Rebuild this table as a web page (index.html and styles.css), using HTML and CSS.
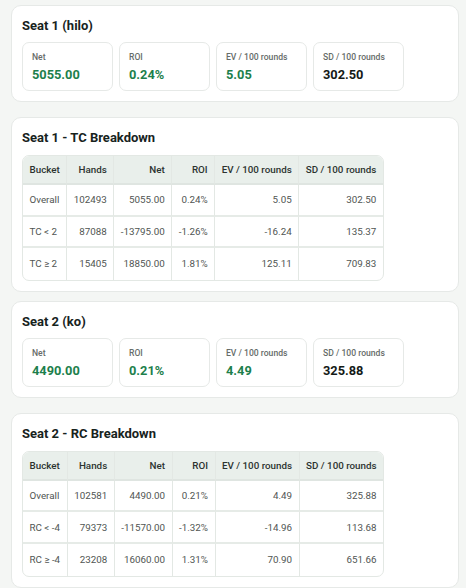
FILE: index.html
```html
<!DOCTYPE html>
<html>
<head>
<meta charset="utf-8">
<link rel="stylesheet" href="styles.css">
</head>
<body>
<main class="page">
  <section class="card card-summary">
    <h2 class="card-title">Seat 1 (hilo)</h2>
    <div class="stats">
      <div class="stat"><div class="stat-label">Net</div><div class="stat-value pos">5055.00</div></div>
      <div class="stat"><div class="stat-label">ROI</div><div class="stat-value pos">0.24%</div></div>
      <div class="stat"><div class="stat-label">EV / 100 rounds</div><div class="stat-value pos">5.05</div></div>
      <div class="stat"><div class="stat-label">SD / 100 rounds</div><div class="stat-value">302.50</div></div>
    </div>
  </section>

  <section class="card card-breakdown">
    <h2 class="card-title">Seat 1 - TC Breakdown</h2>
    <table class="tbl">
      <thead>
        <tr><th class="l">Bucket</th><th>Hands</th><th>Net</th><th>ROI</th><th>EV / 100 rounds</th><th>SD / 100 rounds</th></tr>
      </thead>
      <tbody>
        <tr><td class="l">Overall</td><td>102493</td><td>5055.00</td><td>0.24%</td><td>5.05</td><td>302.50</td></tr>
        <tr><td class="l">TC &lt; 2</td><td>87088</td><td>-13795.00</td><td>-1.26%</td><td>-16.24</td><td>135.37</td></tr>
        <tr><td class="l">TC ≥ 2</td><td>15405</td><td>18850.00</td><td>1.81%</td><td>125.11</td><td>709.83</td></tr>
      </tbody>
    </table>
  </section>

  <section class="card card-summary">
    <h2 class="card-title">Seat 2 (ko)</h2>
    <div class="stats">
      <div class="stat"><div class="stat-label">Net</div><div class="stat-value pos">4490.00</div></div>
      <div class="stat"><div class="stat-label">ROI</div><div class="stat-value pos">0.21%</div></div>
      <div class="stat"><div class="stat-label">EV / 100 rounds</div><div class="stat-value pos">4.49</div></div>
      <div class="stat"><div class="stat-label">SD / 100 rounds</div><div class="stat-value">325.88</div></div>
    </div>
  </section>

  <section class="card card-breakdown">
    <h2 class="card-title">Seat 2 - RC Breakdown</h2>
    <table class="tbl">
      <thead>
        <tr><th class="l">Bucket</th><th>Hands</th><th>Net</th><th>ROI</th><th>EV / 100 rounds</th><th>SD / 100 rounds</th></tr>
      </thead>
      <tbody>
        <tr><td class="l">Overall</td><td>102581</td><td>4490.00</td><td>0.21%</td><td>4.49</td><td>325.88</td></tr>
        <tr><td class="l">RC &lt; -4</td><td>79373</td><td>-11570.00</td><td>-1.32%</td><td>-14.96</td><td>113.68</td></tr>
        <tr><td class="l">RC ≥ -4</td><td>23208</td><td>16060.00</td><td>1.31%</td><td>70.90</td><td>651.66</td></tr>
      </tbody>
    </table>
  </section>
</main>
</body>
</html>
```

FILE: styles.css
```css
* { box-sizing: border-box; }
html, body { margin: 0; padding: 0; }
body {
  background: #f4f6f4;
  font-family: Roboto, "Liberation Sans", sans-serif;
  color: #1b2420;
}
.page {
  display: flex;
  flex-direction: column;
  padding: 5px 7px 0 11px;
}
.card {
  background: #fff;
  border: 1px solid #e6e9e7;
  border-radius: 10px;
  padding: 12px 10px 10px 10px;
}
.card-summary { margin-bottom: 15px; }
.card-breakdown { margin-bottom: 9px; }
.card-title {
  margin: 0 0 9px 0;
  font-size: 13px;
  font-weight: 700;
  line-height: 15px;
  color: #17231d;
}
.card-breakdown .card-title { margin-bottom: 10px; }
.stats {
  display: flex;
  gap: 6px;
}
.stat {
  width: 91px;
  border: 1px solid #e6e9e7;
  border-radius: 7px;
  padding: 9px 8px 8px 9px;
  display: flex;
  flex-direction: column;
  gap: 5px;
}
.stat-label {
  font-size: 8.6px;
  font-weight: 500;
  color: #666c69;
  line-height: 10px;
}
.stat-value {
  font-size: 12.8px;
  font-weight: 700;
  color: #141a17;
  line-height: 15px;
}
.stat-value.pos { color: #1d7f4c; }
.tbl {
  border-collapse: separate;
  border-spacing: 0;
  border: 1px solid #e3e8e4;
  border-radius: 7px;
  overflow: hidden;
  font-size: 9.8px;
  align-self: flex-start;
}
.tbl th, .tbl td {
  text-align: right;
  padding: 0 6.5px;
  white-space: nowrap;
  border-right: 1px solid #e3e8e4;
}
.tbl th:last-child, .tbl td:last-child { border-right: none; }
.tbl th.l, .tbl td.l { text-align: left; }
.tbl th {
  background: #e9efeb;
  font-weight: 500;
  color: #2c3330;
  height: 29px;
  border-bottom: 2px solid #dfe5e1;
}
.tbl td {
  color: #505552;
  height: 31.6px;
  border-bottom: 2px solid #e6ebe7;
}
.tbl tbody tr:last-child td { border-bottom: none; }
```
